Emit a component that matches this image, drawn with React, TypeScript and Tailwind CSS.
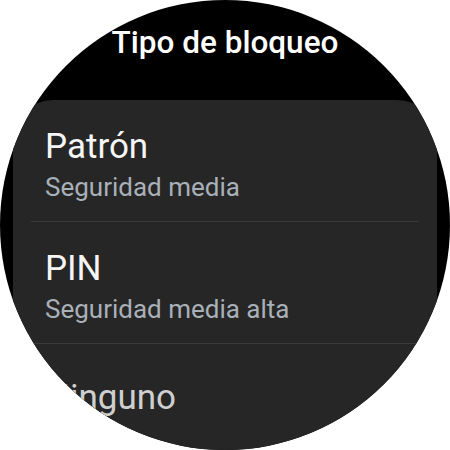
export default function App() {
  const items = [
    { title: "Patrón", sub: "Seguridad media" },
    { title: "PIN", sub: "Seguridad media alta" },
  ];

  return (
    <div className="w-[450px] h-[450px] bg-white">
      <div
        className="w-full h-full rounded-full bg-black overflow-hidden flex flex-col"
        style={{ fontFamily: "Roboto, 'Noto Sans', sans-serif" }}
      >
        {/* HEADER */}
        <h1 className="pt-[25px] text-center text-[31.5px] leading-[36px] font-medium text-white">
          Tipo de bloqueo
        </h1>

        {/* LIST */}
        <div className="mt-[39px] mx-[13px] flex-1 bg-[#262626] rounded-t-[40px]">
          {items.map((item) => (
            <div key={item.title}>
              <div className="pt-[27px] pb-[18px] pl-[32px]">
                <p className="text-[35px] leading-[40px] text-[#f5f5f5]">
                  {item.title}
                </p>
                <p className="mt-[4px] text-[26px] leading-[32px] text-[#a9b0b8]">
                  {item.sub}
                </p>
              </div>
              <div className="mx-[18px] h-px bg-[#3a3a3a]" />
            </div>
          ))}

          <div className="pt-[34px] pl-[32px]">
            <p className="text-[35px] leading-[40px] text-[#cfcfcf]">
              Ninguno
            </p>
          </div>
        </div>
      </div>
    </div>
  );
}
